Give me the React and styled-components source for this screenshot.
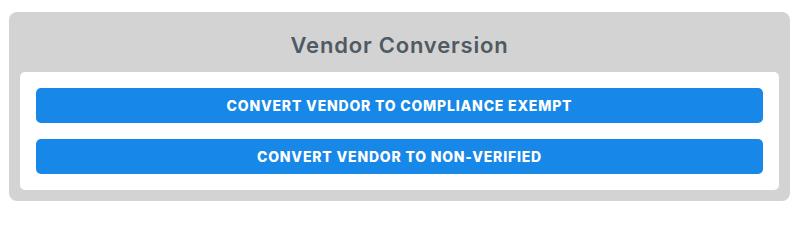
import styled, { createGlobalStyle } from "styled-components";

const GlobalStyle = createGlobalStyle`
  body {
    margin: 0;
    background: #fff;
    font-family: Inter, "Open Sans", sans-serif;
  }
`;

const Page = styled.div`
  padding: 12px 11px 0 9px;
`;

const Panel = styled.section`
  background-color: #d3d3d3;
  border-radius: 8px;
  padding: 0 11px 11px;
`;

const Title = styled.h2`
  margin: 0;
  height: 54px;
  padding-top: 6px;
  display: flex;
  align-items: center;
  justify-content: center;
  font-size: 22px;
  font-weight: 600;
  letter-spacing: 0.8px;
  color: #4f5a62;
`;

const Card = styled.div`
  background-color: #fff;
  border-radius: 5px;
  padding: 16px;
  display: flex;
  flex-direction: column;
  gap: 16px;
`;

const Button = styled.button`
  height: 35px;
  border: none;
  border-radius: 5px;
  background-color: #1787e8;
  color: #fff;
  font-family: Inter, "Open Sans", sans-serif;
  font-size: 14px;
  font-weight: 800;
  letter-spacing: 0.8px;
  text-transform: uppercase;
  cursor: pointer;
`;

const App = () => {
  return (
    <Page>
      <GlobalStyle />
      <Panel>
        <Title>Vendor Conversion</Title>
        <Card>
          <Button>Convert Vendor to Compliance Exempt</Button>
          <Button>Convert Vendor to Non-Verified</Button>
        </Card>
      </Panel>
    </Page>
  );
};

export default App;
